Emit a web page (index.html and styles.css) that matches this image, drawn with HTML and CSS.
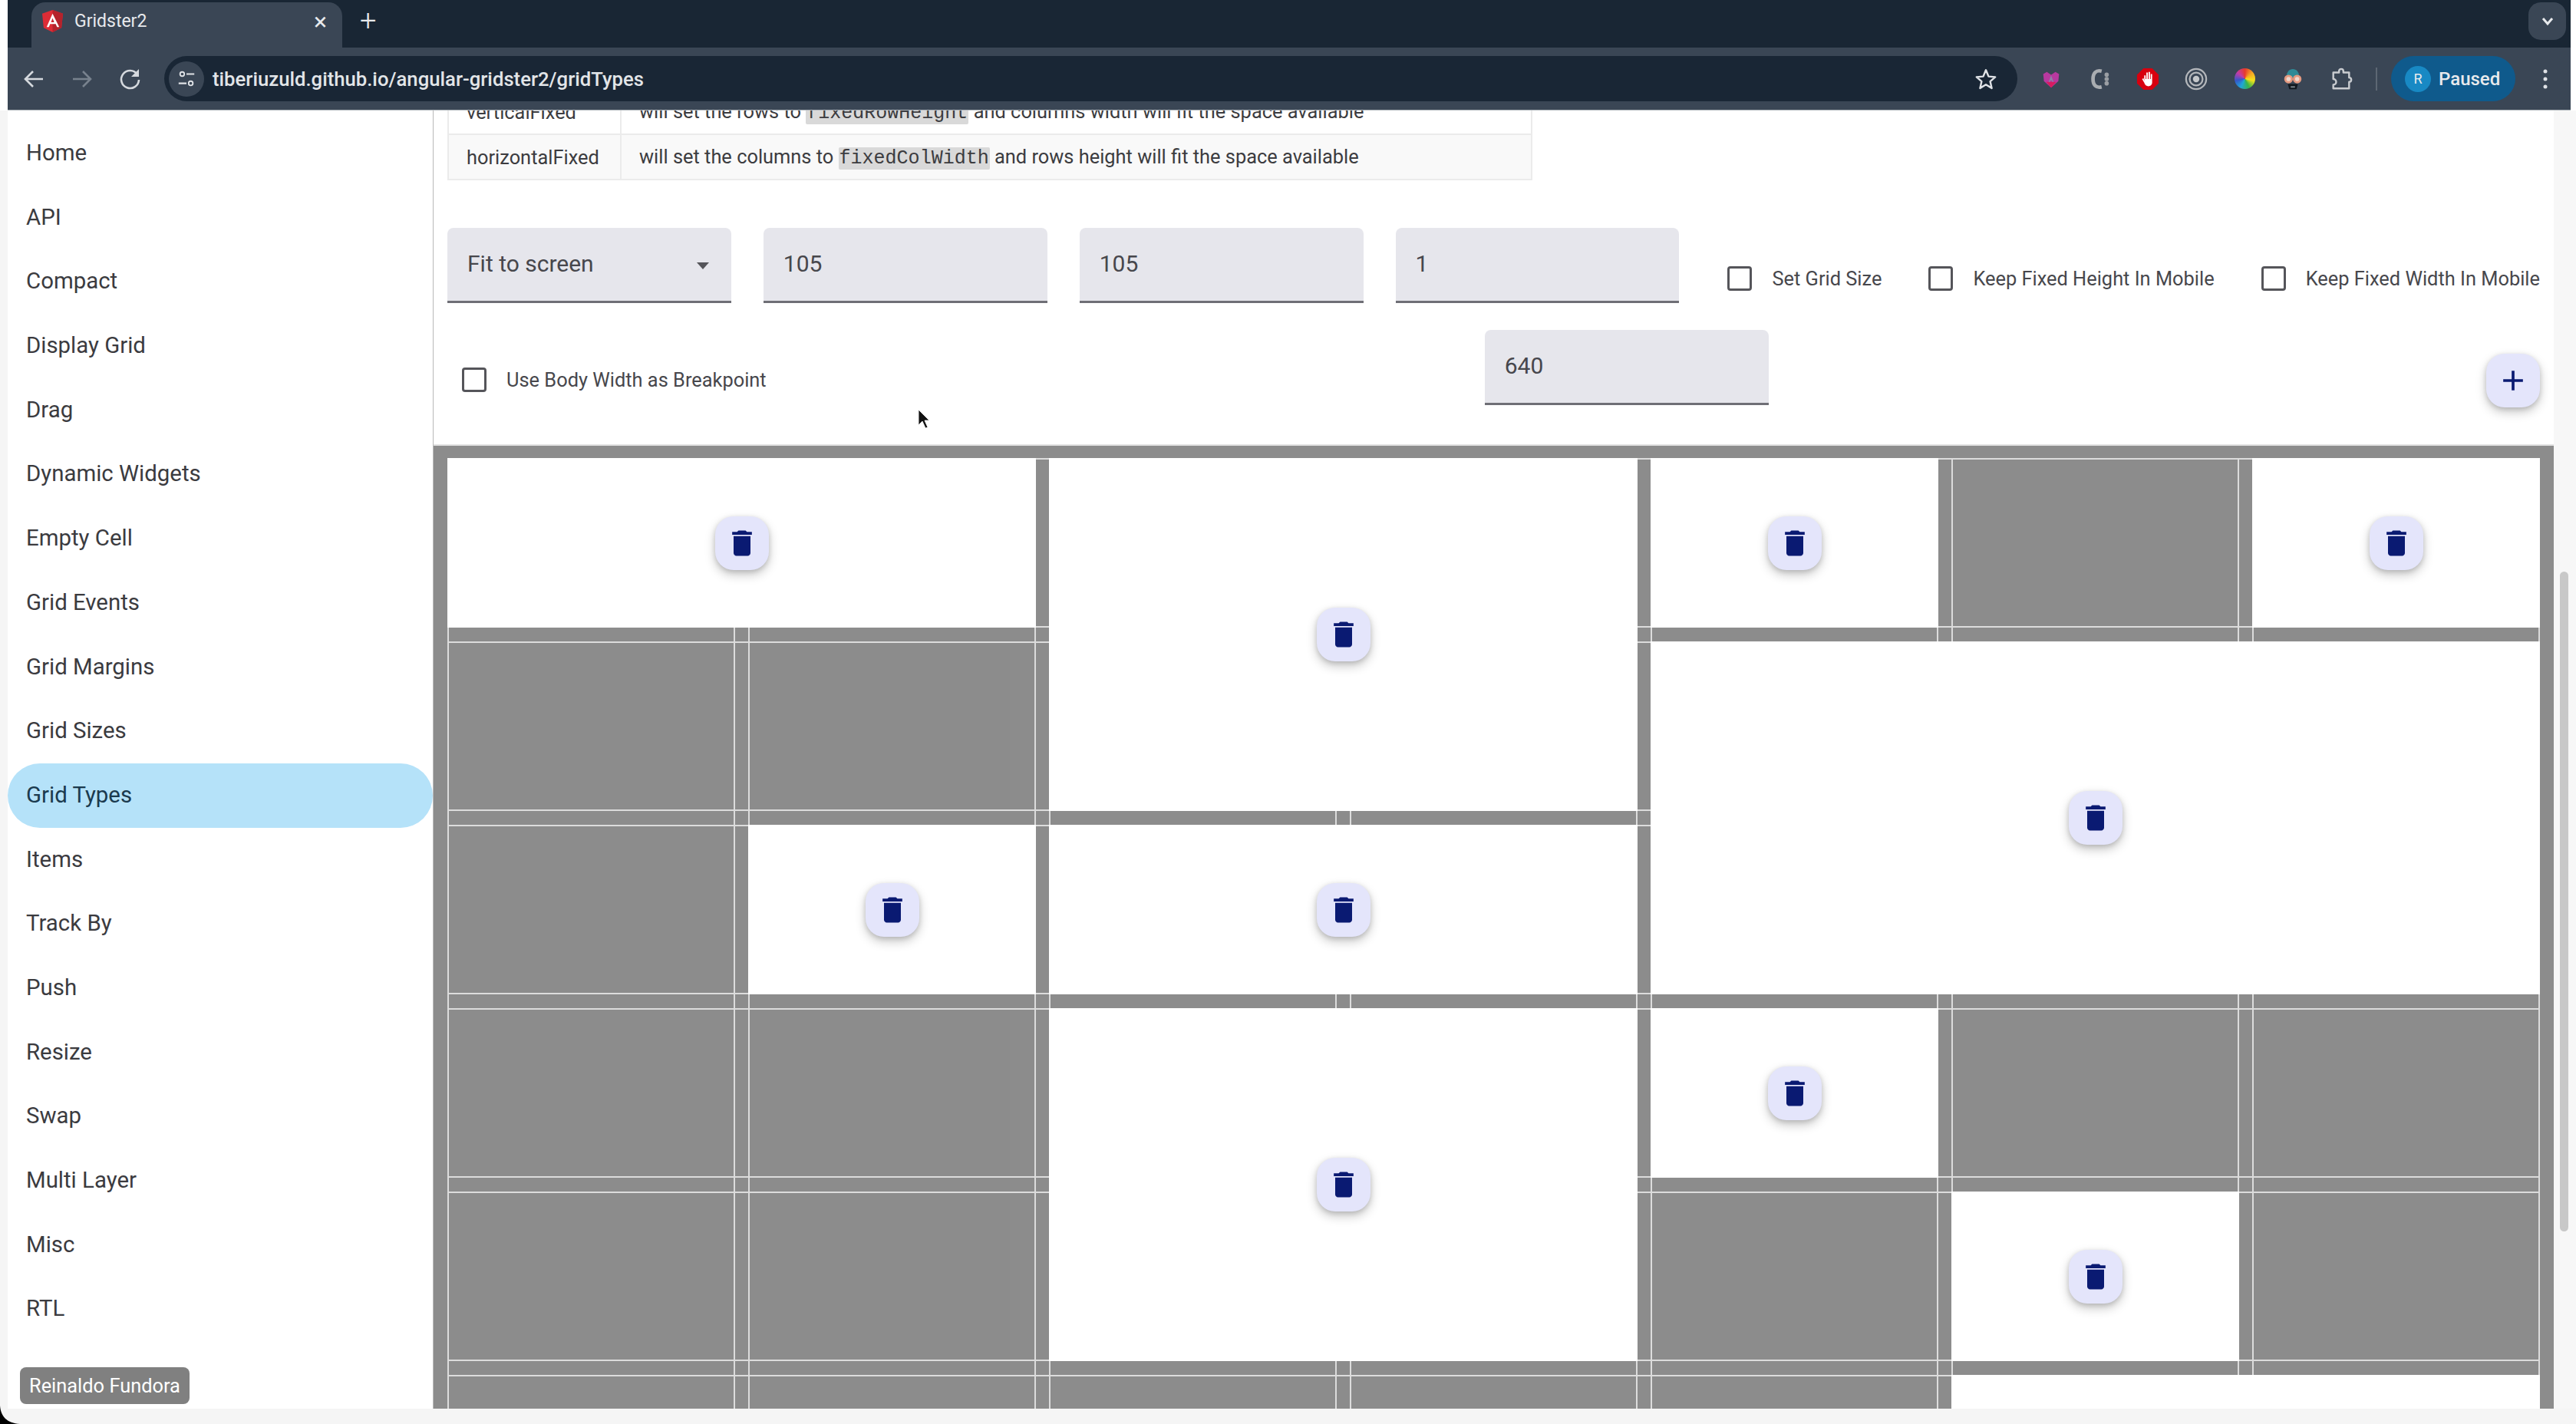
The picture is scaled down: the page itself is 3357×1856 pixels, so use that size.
FILE: index.html
```html
<!DOCTYPE html>
<html lang="en">
<head>
  <meta charset="UTF-8" />
  <title>Gridster2</title>
  <link rel="stylesheet" href="styles.css">
</head>
<body>
  <div class="browser">
    <div class="tabbar">
      <div class="tab">
        <svg class="favicon" viewBox="0 0 30 30"><path d="M15 0 29 5 27 24 15 30 3 24 1 5Z" fill="#dd2c36"/><path d="M15 0 29 5 27 24 15 30Z" fill="#b5232c"/><path d="M15 5 7 23h3l1.700-4h7.600l1.700 4h3ZM12.800 16.500 15 11.200l2.200 5.300Z" fill="#fff"/></svg>
        <span class="tab-title">Gridster2</span>
        <span class="tab-close">×</span>
      </div>
      <span class="new-tab">+</span>
      <div class="tab-menu">
        <svg viewBox="0 0 20 20" width="20" height="20"><path d="M4 6l6 7 6-7" fill="none" stroke="#e8eaed" stroke-width="3"/></svg>
      </div>
    </div>
    <div class="toolbar">
      <svg class="nav-icon" viewBox="0 0 32 32"><path d="M28 16H6M15 6 5 16l10 10" fill="none" stroke="#d5d9de" stroke-width="2.600"/></svg>
      <svg class="nav-icon" viewBox="0 0 32 32"><path d="M4 16h22M17 6l10 10-10 10" fill="none" stroke="#78828e" stroke-width="2.600"/></svg>
      <svg class="nav-icon" viewBox="0 0 32 32"><path d="M25 10A11.500 11.500 0 1 0 27 17" fill="none" stroke="#d5d9de" stroke-width="2.600"/><path d="M27 3v10H17Z" fill="#d5d9de"/></svg>
      <div class="address">
        <div class="site-info">
          <svg viewBox="0 0 28 28" width="26" height="26"><circle cx="8" cy="7" r="3" fill="none" stroke="#dfe2e6" stroke-width="2"/><path d="M14 7h11M3 20h11" stroke="#dfe2e6" stroke-width="2.400"/><circle cx="20" cy="20" r="3" fill="none" stroke="#dfe2e6" stroke-width="2"/></svg>
        </div>
        <span class="url">tiberiuzuld.github.io/angular-gridster2/gridTypes</span>
        <svg class="star" viewBox="0 0 32 32"><path d="M16 3.500 19.700 12.400 29 13.200 22 19.400 24.100 28.700 16 23.800 7.900 28.700 10 19.400 3 13.200 12.300 12.400Z" fill="none" stroke="#dfe2e6" stroke-width="2.600" stroke-linejoin="round"/></svg>
      </div>
      <div class="extensions">
        <svg class="ext" viewBox="0 0 32 32"><path d="M10 6 16 10 22 6 27 9 26 19 16 28 6 19 5 9Z" fill="#b8399f"/><path d="M9 20h14l-7 8Z" fill="#d81b60"/><path d="M16 11 12.500 20h2l.6-2h1.800l.6 2h2Z" fill="#8f7fa6"/></svg>
        <svg class="ext" viewBox="0 0 32 32"><path d="M19 5C11 3 7 8 7 16s4 13 12 11" fill="none" stroke="#a9adb1" stroke-width="5"/><circle cx="26" cy="10" r="3" fill="#9a9ea3"/><circle cx="26" cy="16" r="3" fill="#9a9ea3"/><circle cx="26" cy="22" r="3" fill="#9a9ea3"/></svg>
        <svg class="ext" viewBox="0 0 32 32"><path d="M10 1H22L31 10V22L22 31H10L1 22V10Z" fill="#d8000f"/><path d="M11 18V11h2v5h1V7h2v9h1V6h2v10h1V9h2v12c0 3-3 5-5 5-3 0-5-2-6-5l-3-5 2-1Z" fill="#fff"/></svg>
        <svg class="ext" viewBox="0 0 32 32"><circle cx="16" cy="16" r="14" fill="none" stroke="#b4b7bb" stroke-width="2.400"/><circle cx="16" cy="16" r="9" fill="none" stroke="#b4b7bb" stroke-width="2.400"/><circle cx="16" cy="16" r="4.500" fill="#c4c7ca"/></svg>
        <div class="ext color-wheel"></div>
        <svg class="ext" viewBox="0 0 32 32"><path d="M7 14C7 6 11 2 16 2s9 4 9 12Z" fill="#2f8a96"/><circle cx="10" cy="16" r="6" fill="#e59a80"/><circle cx="22" cy="16" r="6" fill="#e59a80"/><circle cx="10" cy="16" r="3" fill="#f0d8cc"/><circle cx="22" cy="16" r="3" fill="#f0d8cc"/><path d="M9 23h14l-2 7H11Z" fill="#11181f"/><path d="M13 26h6v2h-6Z" fill="#7f8890"/></svg>
        <svg class="ext" viewBox="0 0 32 32"><path d="M5 7h8V5a3 3 0 0 1 6 0v2h8v7a3 3 0 0 1 0 6v9H5v-5a4 4 0 0 0 0-8v-4Z" fill="none" stroke="#c9ccd0" stroke-width="2.600" stroke-linejoin="round"/></svg>
      </div>
      <div class="divider"></div>
      <div class="profile">
        <span class="avatar">R</span>
        <span class="paused">Paused</span>
      </div>
      <svg class="dots" viewBox="0 0 8 26"><circle cx="4" cy="3" r="2.500" fill="#dfe2e6"/><circle cx="4" cy="13" r="2.500" fill="#dfe2e6"/><circle cx="4" cy="23" r="2.500" fill="#dfe2e6"/></svg>
    </div>
  </div>

  <div class="page">
    <nav class="sidebar">
      <a class="nav-item">Home</a>
      <a class="nav-item">API</a>
      <a class="nav-item">Compact</a>
      <a class="nav-item">Display Grid</a>
      <a class="nav-item">Drag</a>
      <a class="nav-item">Dynamic Widgets</a>
      <a class="nav-item">Empty Cell</a>
      <a class="nav-item">Grid Events</a>
      <a class="nav-item">Grid Margins</a>
      <a class="nav-item">Grid Sizes</a>
      <a class="nav-item active">Grid Types</a>
      <a class="nav-item">Items</a>
      <a class="nav-item">Track By</a>
      <a class="nav-item">Push</a>
      <a class="nav-item">Resize</a>
      <a class="nav-item">Swap</a>
      <a class="nav-item">Multi Layer</a>
      <a class="nav-item">Misc</a>
      <a class="nav-item">RTL</a>
      <span class="author">Reinaldo Fundora</span>
    </nav>

    <main class="content">
      <div class="controls">
        <table class="types">
          <tr>
            <td class="type-name">verticalFixed</td>
            <td>will set the rows to <code>fixedRowHeight</code> and columns width will fit the space available</td>
          </tr>
          <tr class="even">
            <td class="type-name">horizontalFixed</td>
            <td>will set the columns to <code>fixedColWidth</code> and rows height will fit the space available</td>
          </tr>
        </table>

        <div class="options first">
          <div class="field select">Fit to screen<span class="arrow"></span></div>
          <div class="field">105</div>
          <div class="field">105</div>
          <div class="field">1</div>
          <div class="checks">
            <label class="check"><span class="box"></span>Set Grid Size</label>
            <label class="check"><span class="box"></span>Keep Fixed Height In Mobile</label>
            <label class="check"><span class="box"></span>Keep Fixed Width In Mobile</label>
          </div>
        </div>

        <div class="options second">
          <label class="check body-width"><span class="box"></span>Use Body Width as Breakpoint</label>
          <div class="field breakpoint">640</div>
          <button class="fab add">
            <svg viewBox="0 0 24 24"><path d="M19 13h-6v6h-2v-6H5v-2h6V5h2v6h6v2z"/></svg>
          </button>
        </div>
      </div>

      <div class="gridster">
        <div class="g-col c1"></div><div class="g-col c2"></div><div class="g-col c3"></div><div class="g-col c4"></div><div class="g-col c5"></div><div class="g-col c6"></div><div class="g-col c7"></div>
        <div class="g-row r1"></div><div class="g-row r2"></div><div class="g-row r3"></div><div class="g-row r4"></div><div class="g-row r5"></div><div class="g-row r6"></div>

        <div class="item i1"><button class="fab"><svg viewBox="0 0 24 24"><path d="M6 19c0 1.100.9 2 2 2h8c1.100 0 2-.9 2-2V7H6v12zM19 4h-3.500l-1-1h-5l-1 1H5v2h14V4z"/></svg></button></div>
        <div class="item i2"><button class="fab"><svg viewBox="0 0 24 24"><path d="M6 19c0 1.100.9 2 2 2h8c1.100 0 2-.9 2-2V7H6v12zM19 4h-3.500l-1-1h-5l-1 1H5v2h14V4z"/></svg></button></div>
        <div class="item i3"><button class="fab"><svg viewBox="0 0 24 24"><path d="M6 19c0 1.100.9 2 2 2h8c1.100 0 2-.9 2-2V7H6v12zM19 4h-3.500l-1-1h-5l-1 1H5v2h14V4z"/></svg></button></div>
        <div class="item i4"><button class="fab"><svg viewBox="0 0 24 24"><path d="M6 19c0 1.100.9 2 2 2h8c1.100 0 2-.9 2-2V7H6v12zM19 4h-3.500l-1-1h-5l-1 1H5v2h14V4z"/></svg></button></div>
        <div class="item i5"><button class="fab"><svg viewBox="0 0 24 24"><path d="M6 19c0 1.100.9 2 2 2h8c1.100 0 2-.9 2-2V7H6v12zM19 4h-3.500l-1-1h-5l-1 1H5v2h14V4z"/></svg></button></div>
        <div class="item i6"><button class="fab"><svg viewBox="0 0 24 24"><path d="M6 19c0 1.100.9 2 2 2h8c1.100 0 2-.9 2-2V7H6v12zM19 4h-3.500l-1-1h-5l-1 1H5v2h14V4z"/></svg></button></div>
        <div class="item i7"><button class="fab"><svg viewBox="0 0 24 24"><path d="M6 19c0 1.100.9 2 2 2h8c1.100 0 2-.9 2-2V7H6v12zM19 4h-3.500l-1-1h-5l-1 1H5v2h14V4z"/></svg></button></div>
        <div class="item i8"><button class="fab"><svg viewBox="0 0 24 24"><path d="M6 19c0 1.100.9 2 2 2h8c1.100 0 2-.9 2-2V7H6v12zM19 4h-3.500l-1-1h-5l-1 1H5v2h14V4z"/></svg></button></div>
        <div class="item i9"><button class="fab"><svg viewBox="0 0 24 24"><path d="M6 19c0 1.100.9 2 2 2h8c1.100 0 2-.9 2-2V7H6v12zM19 4h-3.500l-1-1h-5l-1 1H5v2h14V4z"/></svg></button></div>
        <div class="item i10"><button class="fab"><svg viewBox="0 0 24 24"><path d="M6 19c0 1.100.9 2 2 2h8c1.100 0 2-.9 2-2V7H6v12zM19 4h-3.500l-1-1h-5l-1 1H5v2h14V4z"/></svg></button></div>
        <div class="item i11"></div>
      </div>
    </main>

    <div class="scrollbar"><div class="thumb"></div></div>
  </div>

  <!-- mouse pointer and window corner from the recording -->
  <svg class="cursor" viewBox="0 0 16 26"><path d="M1 1v20l5-5 4 9 3-1-4-9h6Z" fill="#111" stroke="#fff" stroke-width=".8"/></svg>
  <svg class="corner" viewBox="0 0 26 24"><path d="M0 0C1 14 9 23 26 24H0Z" fill="#000"/></svg>
</body>
</html>
```

FILE: styles.css
```css
* {
  box-sizing: border-box;
}
html, body {
  margin: 0;
  height: 1856px;
  overflow: hidden;
}
body {
  position: relative;
  width: 3357px;
  background: #f5f5f5;
  font-family: Roboto, "Liberation Sans", sans-serif;
  color: #3c3c40;
}

/* browser top */
.browser {
  margin: 0 7px 0 10px;
  height: 144px;
  border-bottom: 1px solid #aeb4ba;
  background: #3a4655;
  color: #e8eaed;
  box-shadow: -10px 0 0 #fff, 7px 0 0 #fff;
}
.tabbar {
  height: 62px;
  background: #192634;
  display: flex;
  align-items: flex-start;
  padding: 3px 6px 0 31px;
}
.tab {
  width: 405px;
  height: 59px;
  background: #3a4655;
  border-radius: 18px 18px 0 0;
  display: flex;
  align-items: center;
  padding: 0 14px 10px 13px;
}
.favicon {
  width: 29px;
  height: 29px;
}
.tab-title {
  margin-left: 14px;
  font-size: 23px;
  flex: 1;
}
.tab-close {
  font-size: 32px;
  line-height: 1;
  margin-right: 6px;
}
.new-tab {
  margin: 2px 0 0 23px;
  font-size: 38px;
  line-height: 44px;
  font-weight: 300;
}
.tab-menu {
  margin-left: auto;
  width: 49px;
  height: 49px;
  border-radius: 16px;
  background: #3a4655;
  display: flex;
  align-items: center;
  justify-content: center;
}
.toolbar {
  height: 81px;
  display: flex;
  align-items: center;
  padding: 0 0 0 18px;
}
.nav-icon {
  width: 32px;
  height: 32px;
  margin-right: 31px;
}
.nav-icon:nth-child(3) {
  margin-right: 28px;
}
.address {
  width: 2415px;
  height: 59px;
  border-radius: 30px;
  background: #192635;
  display: flex;
  align-items: center;
  padding: 0 26px 0 6px;
}
.site-info {
  width: 46px;
  height: 46px;
  border-radius: 50%;
  background: #3a4655;
  display: flex;
  align-items: center;
  justify-content: center;
}
.url {
  margin-left: 11px;
  font-size: 25.7px;
  font-weight: 500;
  color: #e2e5e8;
}
.star {
  margin-left: auto;
  width: 30px;
  height: 30px;
}
.extensions {
  display: flex;
  align-items: center;
  gap: 33px;
  margin-left: 29px;
}
.ext {
  width: 30px;
  height: 30px;
}
.color-wheel {
  width: 27px;
  height: 27px;
  margin: 0 1.500px;
  border-radius: 50%;
  background: conic-gradient(#e8392c, #f5a623, #f4e11c, #35b44a, #1fa7d8, #3558c8, #c03ca8, #e8392c);
}
.divider {
  width: 2px;
  height: 30px;
  background: #5d6773;
  margin-left: 30px;
}
.profile {
  margin-left: 18px;
  width: 162px;
  height: 59px;
  border-radius: 30px;
  background: #0f5a8c;
  display: flex;
  align-items: center;
  padding-left: 18px;
}
.avatar {
  width: 34px;
  height: 34px;
  border-radius: 50%;
  background: #1889c4;
  font-size: 18px;
  display: flex;
  align-items: center;
  justify-content: center;
}
.paused {
  margin-left: 10px;
  font-size: 24px;
  font-weight: 500;
}
.dots {
  margin-left: 35px;
  width: 8px;
  height: 26px;
}

/* page */
.page {
  display: flex;
  height: 1692px;
  margin-left: 10px;
}
.sidebar {
  width: 555px;
  flex-shrink: 0;
  background: #fff;
  border-right: 1px solid #b9b9b9;
  padding-top: 14px;
  display: flex;
  flex-direction: column;
}
.nav-item {
  height: 83.7px;
  line-height: 83.7px;
  padding-left: 24px;
  font-size: 29.4px;
  color: #3b3b3f;
  flex-shrink: 0;
}
.nav-item.active {
  background: #b5e2f9;
  border-radius: 42px;
  color: #1b3a4e;
}
.author {
  margin: auto 0 6px 16px;
  align-self: flex-start;
  background: #808080;
  color: #fff;
  border-radius: 8px;
  height: 48px;
  line-height: 48px;
  padding: 0 12px;
  font-size: 25.4px;
}
.content {
  width: 2763px;
  flex-shrink: 0;
  background: #fff;
  overflow: hidden;
}
.controls {
  padding: 0 18px 48px 18px;
}
.types {
  margin-top: -29px;
  width: 1414px;
  border-collapse: collapse;
  font-size: 25.4px;
  color: #3c3c40;
}
.types td {
  height: 59px;
  padding: 0 23px;
  border: 2px solid #ebebeb;
}
.types .type-name {
  width: 225px;
}
.types .even {
  background: #f9f9f9;
}
.types code {
  font-family: "Liberation Mono", monospace;
  font-size: 25px;
  background: #d9d9d9;
  padding: 0 1px;
  border-radius: 2px;
}
.options {
  display: flex;
  align-items: flex-start;
}
.first {
  gap: 42px;
  margin-top: 62px;
}
.second {
  margin-top: 35px;
}
.field {
  width: 370px;
  height: 98px;
  background: #e6e6ec;
  border-radius: 8px 8px 0 0;
  border-bottom: 3px solid #6f6f76;
  padding: 0 27px 0 26px;
  line-height: 94px;
  font-size: 30px;
  color: #47474c;
  position: relative;
}
.arrow {
  position: absolute;
  right: 29px;
  top: 45px;
  border-left: 8px solid transparent;
  border-right: 8px solid transparent;
  border-top: 9px solid #55555a;
}
.checks {
  display: flex;
  margin: 50px 0 0 21px;
  gap: 61px;
}
.check {
  display: flex;
  align-items: center;
  font-size: 25.4px;
  color: #47474c;
  white-space: nowrap;
}
.box {
  width: 32px;
  height: 32px;
  border: 3px solid #55555a;
  border-radius: 4px;
  margin-right: 26px;
}
.body-width {
  margin: 49px 0 0 19px;
}
.breakpoint {
  margin-left: 936px;
}
.fab {
  width: 70px;
  height: 70px;
  border: 0;
  padding: 0;
  border-radius: 24px;
  background: #e4e5fb;
  box-shadow: 0 6px 14px rgba(0,0,0,0.22), 0 2px 6px rgba(0,0,0,0.14);
  display: flex;
  align-items: center;
  justify-content: center;
}
.fab svg {
  width: 44px;
  height: 44px;
  fill: #0a1a72;
}
.add {
  margin: 31px 0 0 auto;
}

/* grid */
.gridster {
  height: 1257px;
  background: #8c8c8c;
  border-top: 2px solid #e2e2e2;
  display: grid;
  grid-template-columns: repeat(7, 375px);
  grid-template-rows: repeat(6, 221px);
  column-gap: 17px;
  row-gap: 18px;
  padding: 16px 0 0 18px;
  overflow: hidden;
}
.g-col {
  grid-row: 1 / -1;
  border-left: 2px solid #dcdcdc;
  border-right: 2px solid #dcdcdc;
}
.g-row {
  grid-column: 1 / -1;
  border-top: 2px solid #dcdcdc;
  border-bottom: 2px solid #dcdcdc;
}
.c1 { grid-column: 1; }
.c2 { grid-column: 2; }
.c3 { grid-column: 3; }
.c4 { grid-column: 4; }
.c5 { grid-column: 5; }
.c6 { grid-column: 6; }
.c7 { grid-column: 7; }
.r1 { grid-row: 1; }
.r2 { grid-row: 2; }
.r3 { grid-row: 3; }
.r4 { grid-row: 4; }
.r5 { grid-row: 5; }
.r6 { grid-row: 6; }
.item {
  background: #fff;
  display: flex;
  align-items: center;
  justify-content: center;
  z-index: 1;
}
.i1 { grid-column: 1 / span 2; grid-row: 1; }
.i2 { grid-column: 3 / span 2; grid-row: 1 / span 2; }
.i3 { grid-column: 5; grid-row: 1; }
.i4 { grid-column: 7; grid-row: 1; }
.i5 { grid-column: 5 / span 3; grid-row: 2 / span 2; }
.i6 { grid-column: 2; grid-row: 3; }
.i7 { grid-column: 3 / span 2; grid-row: 3; }
.i8 { grid-column: 3 / span 2; grid-row: 4 / span 2; }
.i9 { grid-column: 5; grid-row: 4; }
.i10 { grid-column: 6; grid-row: 5; }
.i11 { grid-column: 6 / span 2; grid-row: 6; }

.scrollbar {
  flex: 1;
  background: #f7f7f7;
  padding: 601px 0 0 8px;
}
.thumb {
  width: 11px;
  height: 860px;
  border-radius: 6px;
  background: #c8c8c8;
}
.cursor {
  position: absolute;
  left: 1196px;
  top: 533px;
  width: 16px;
  height: 26px;
}
.corner {
  position: absolute;
  left: 0;
  bottom: 0;
  width: 26px;
  height: 24px;
}
```
